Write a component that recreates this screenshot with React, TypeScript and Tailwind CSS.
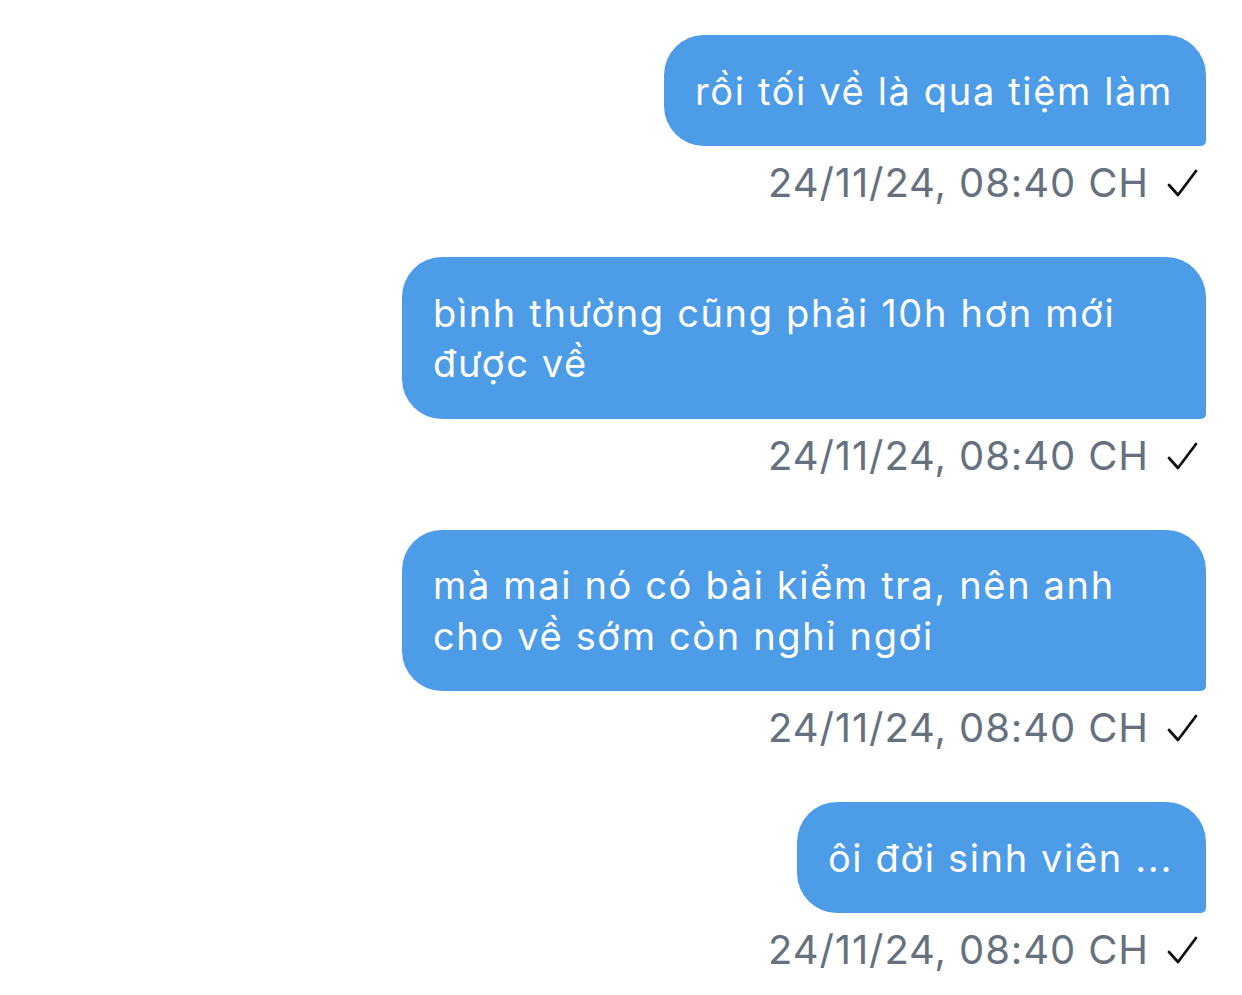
import React from 'react';

const messages = [
  { text: 'rồi tối về là qua tiệm làm', time: '24/11/24, 08:40 CH' },
  { text: 'bình thường cũng phải 10h hơn mới được về', time: '24/11/24, 08:40 CH' },
  { text: 'mà mai nó có bài kiểm tra, nên anh cho về sớm còn nghỉ ngơi', time: '24/11/24, 08:40 CH' },
  { text: 'ôi đời sinh viên ...', time: '24/11/24, 08:40 CH' },
];

const Check: React.FC = () => (
  <svg width="32" height="30" viewBox="0 0 32 30" className="shrink-0">
    <path d="M3 17 L12 27 L30 3" fill="none" stroke="#111" strokeWidth="2.8" strokeLinecap="round" strokeLinejoin="round" />
  </svg>
);

const App: React.FC = () => {
  return (
    <div className="min-h-[995px] w-[1242px] bg-white pt-[35px] pr-[36px] font-['Inter','Noto_Sans',sans-serif]">
      <div className="flex flex-col items-end">
        {messages.map((m, i) => (
          <div key={i} className="flex flex-col items-end mb-[51px]">
            <div className="max-w-[804px] rounded-[40px] rounded-br-[5px] bg-[#4c9ce8] pl-[31px] pr-[33px] pt-[30.5px] pb-[30px] text-[38px] leading-[50.5px] tracking-[1.65px] text-white">
              {m.text}
            </div>
            <div className="mt-[14px] flex items-center gap-[17px] pr-[8px] text-[40px] leading-[46px] tracking-[0.9px] text-[#66717f]">
              <span>{m.time}</span>
              <Check />
            </div>
          </div>
        ))}
      </div>
    </div>
  );
};

export default App;
